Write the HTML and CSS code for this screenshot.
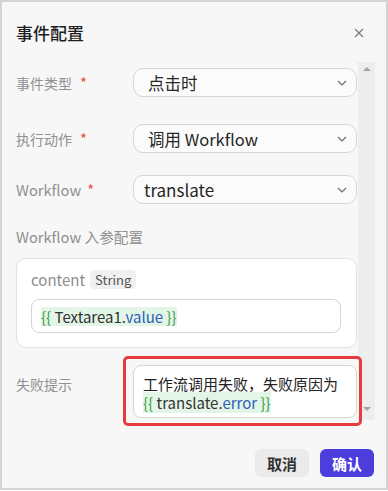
FILE: index.html
```html
<!DOCTYPE html>
<html lang="zh">
<head>
<meta charset="utf-8">
<link rel="stylesheet" href="styles.css">
</head>
<body>
<div class="dialog">
  <div class="header">
    <div class="title">事件配置</div>
    <svg class="close" width="10" height="10" viewBox="0 0 10 10"><path d="M1 1L9 9M9 1L1 9" stroke="#7a7a7a" stroke-width="1.2" fill="none"/></svg>
  </div>
  <div class="body">
    <div class="content">
      <div class="row r1">
        <div class="label">事件类型<span class="star">*</span></div>
        <div class="select"><span>点击时</span><svg class="chev" width="10" height="6" viewBox="0 0 10 6"><path d="M1 1L5 5L9 1" stroke="#6b6b6b" stroke-width="1.2" fill="none"/></svg></div>
      </div>
      <div class="row r2">
        <div class="label">执行动作<span class="star">*</span></div>
        <div class="select"><span>调用 Workflow</span><svg class="chev" width="10" height="6" viewBox="0 0 10 6"><path d="M1 1L5 5L9 1" stroke="#6b6b6b" stroke-width="1.2" fill="none"/></svg></div>
      </div>
      <div class="row r3">
        <div class="label latin">Workflow<span class="star">*</span></div>
        <div class="select"><span>translate</span><svg class="chev" width="10" height="6" viewBox="0 0 10 6"><path d="M1 1L5 5L9 1" stroke="#6b6b6b" stroke-width="1.2" fill="none"/></svg></div>
      </div>
      <div class="section-label">Workflow 入参配置</div>
      <div class="card">
        <div class="param"><span class="pname">content</span><span class="tag">String</span></div>
        <div class="input"><span class="expr"><span class="brace">{{</span> Textarea1.<span class="prop">value</span> <span class="brace">}}</span></span></div>
      </div>
      <div class="row fail">
        <div class="label">失败提示</div>
        <div class="textarea">工作流调用失败，失败原因为<br><span class="expr"><span class="brace">{{</span> translate.<span class="prop">error</span> <span class="brace">}}</span></span></div>
      </div>
    </div>
    <div class="scrollbar">
      <div class="arrow up"></div>
      <div class="arrow down"></div>
    </div>
  </div>
  <div class="footer">
    <button class="btn cancel">取消</button>
    <button class="btn ok">确认</button>
  </div>
  <div class="highlight"></div>
</div>
</body>
</html>
```
FILE: styles.css
```css
* { box-sizing: border-box; }
html, body { margin: 0; padding: 0; background: #ffffff; }
body { font-family: "Noto Sans CJK SC", "Noto Sans", sans-serif; }
.dialog {
  position: relative;
  width: 388px;
  height: 490px;
  border: 2px solid #d4d4d4;
  background: #f7f7f7;
  display: flex;
  flex-direction: column;
}
.header {
  height: 60px;
  display: flex;
  align-items: center;
  justify-content: space-between;
  padding: 0 22px 0 14px;
}
.title { font-size: 17px; font-weight: 500; color: #1e1e1e; }
.close { display: block; margin-top: 1px; }
.body {
  height: 358px;
  display: flex;
  padding-left: 14px;
  padding-right: 11px;
}
.content { flex: 1; }
.scrollbar {
  width: 17px;
  margin-left: 1px;
  background: #ededed;
  display: flex;
  flex-direction: column;
  justify-content: space-between;
  align-items: center;
  padding: 5px 0 9px;
}
.arrow { width: 0; height: 0; border-left: 4px solid transparent; border-right: 4px solid transparent; }
.arrow.up { border-bottom: 4px solid #a3a3a3; }
.arrow.down { border-top: 4px solid #a3a3a3; }
.row { display: flex; align-items: center; }
.r1 { margin-top: 6px; }
.r2 { margin-top: 27px; }
.r3 { margin-top: 22px; }
.label { width: 117px; font-size: 14px; color: #909090; line-height: 20px; }
.label.latin { font-size: 14.7px; }
.star { color: #f0514c; margin-left: 8px; font-size: 15px; }
.label.latin .star { margin-left: 6px; }
.select {
  flex: 1;
  height: 29px;
  border: 1px solid #d5d5d5;
  border-radius: 10px;
  background: #fbfbfb;
  display: flex;
  align-items: center;
  justify-content: space-between;
  padding: 0 9px 0 14px;
  font-size: 16.5px;
  color: #262626;
}
.r3 .select { padding-left: 10px; font-size: 17px; }
.chev { display: block; }
.section-label { margin-top: 23px; font-size: 14.7px; color: #909090; line-height: 20px; }
.card {
  margin-top: 11px;
  background: #ffffff;
  border: 1px solid #e2e2e2;
  border-radius: 10px;
  padding: 11px 15px 14px 14px;
}
.param { display: flex; align-items: center; gap: 5px; height: 19px; }
.pname { font-size: 15px; color: #8c8c8c; }
.tag {
  font-size: 13px;
  color: #555;
  background: #f0f0f0;
  border-radius: 4px;
  padding: 0 5px;
  line-height: 19px;
}
.input {
  margin-top: 10px;
  height: 34px;
  border: 1px solid #d5d5d5;
  border-radius: 8px;
  display: flex;
  align-items: center;
  padding-left: 9px;
  font-size: 15px;
}
.expr { background: #e2f5e6; color: #333; line-height: 19px; }
.brace { color: #3a9b4b; }
.prop { color: #2f5fb8; }
.fail { margin-top: 17px; align-items: flex-start; }
.fail .label { margin-top: 9px; }
.textarea {
  flex: 1;
  height: 53px;
  background: #ffffff;
  border: 1px solid #d5d5d5;
  border-radius: 8px;
  padding: 8px 9px 0;
  font-size: 15px;
  line-height: 19px;
  color: #222;
}
.footer {
  display: flex;
  justify-content: flex-end;
  gap: 11px;
  padding: 29px 12px 0 0;
}
.btn {
  width: 54px;
  height: 28px;
  border: none;
  border-radius: 6px;
  font-family: inherit;
  font-size: 15px;
  font-weight: 600;
  padding: 0;
}
.cancel { background: #ebebeb; color: #333; }
.ok { background: #4c3ddd; color: #ffffff; }
.highlight {
  position: absolute;
  left: 121px;
  top: 354px;
  width: 239px;
  height: 70px;
  border: 3px solid #e63b3f;
  border-radius: 5px;
  pointer-events: none;
}
```
